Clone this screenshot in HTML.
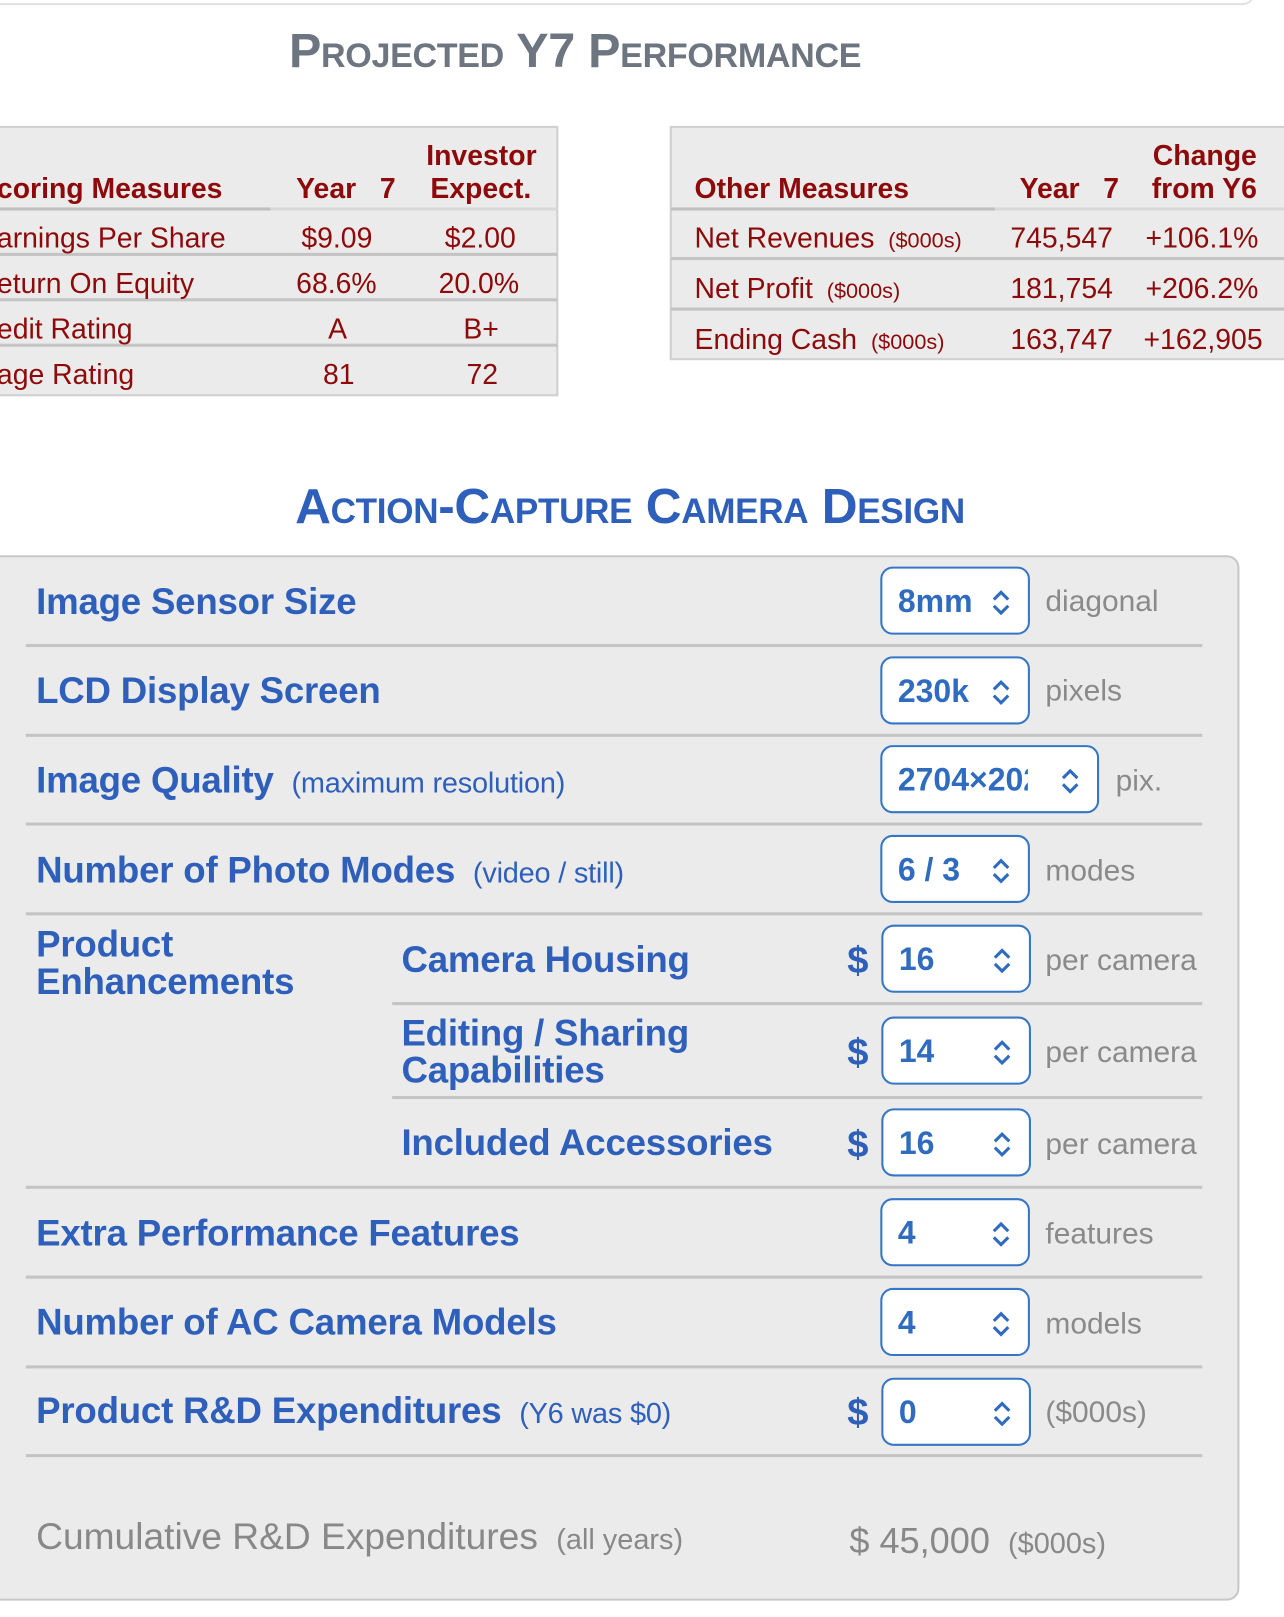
<!DOCTYPE html>
<html style="overflow:hidden;width:1284px;height:1617px"><head><meta charset="utf-8"><style>
*{margin:0;padding:0;box-sizing:border-box}
html,body{overflow:hidden}
body{width:1284px;height:1617px;background:#fff;position:relative;font-family:"Liberation Sans",Arial,sans-serif}
#clip{position:absolute;left:0;top:0;width:1284px;height:1617px;overflow:hidden}
#w{position:absolute;left:0;top:0;width:1244px;height:1567px;transform:scale(1.032);transform-origin:0 0}
.t{position:absolute;white-space:nowrap;line-height:1}
.r{color:#8e0a0a}
.rb{color:#8e0a0a;font-weight:bold}
.b{color:#2e5fbb;font-weight:bold;font-size:35.5px;letter-spacing:-0.2px}
.s{color:#2e5fbb;font-size:28px;font-weight:normal}
.u{color:#8a8a8a;font-size:29px}
.ln{position:absolute;height:3px;background:#c4c4c4}
.in{position:absolute;background:#fff;border:2px solid #3577c6;border-radius:12px;height:66px;width:145px}
.in span{position:absolute;left:15px;top:16px;font-size:31px;font-weight:bold;color:#2f6cc0;line-height:1;white-space:nowrap;overflow:hidden}
.in svg{position:absolute;right:16px;top:20px}
.d{position:absolute;color:#2e5fbb;font-weight:bold;font-size:37px;line-height:1}
.tb{font-size:27.5px}
</style></head><body><div id="clip"><div id="w">
<div style="position:absolute;left:-20px;top:-20px;width:1236px;height:25px;border:2px solid #e0e0e0;border-radius:12px"></div>
<div class="t" style="left:280px;top:25px;font-size:47px;font-weight:bold;color:#6d7680;font-variant:small-caps;letter-spacing:-0.3px">Projected Y7 Performance</div>

<div style="position:absolute;left:-10px;top:122px;width:551px;height:262px;background:#ebebeb;border:2px solid #d0d0d0"></div>
<div class="ln" style="left:0;top:201px;width:262px;background:#c0c0c0"></div>
<div class="ln" style="left:262px;top:201px;width:278px;background:#d8d8d8"></div>
<div class="ln" style="left:0;top:245px;width:540px"></div>
<div class="ln" style="left:0;top:289px;width:540px"></div>
<div class="ln" style="left:0;top:333px;width:540px"></div>
<div class="t rb tb" style="left:-3px;top:169px">coring Measures</div>
<div class="t rb tb" style="left:287px;top:169px">Year&nbsp;&nbsp;&nbsp;7</div>
<div class="t rb tb" style="left:413px;top:137px">Investor</div>
<div class="t rb tb" style="left:417px;top:169px">Expect.</div>
<div class="t r tb" style="left:-3px;top:217px">arnings Per Share</div>
<div class="t r tb" style="left:-3px;top:261px">eturn On Equity</div>
<div class="t r tb" style="left:-3px;top:305px">edit Rating</div>
<div class="t r tb" style="left:-3px;top:349px">age Rating</div>
<div class="t r tb" style="left:292px;top:217px">$9.09</div>
<div class="t r tb" style="left:287px;top:261px">68.6%</div>
<div class="t r tb" style="left:318px;top:305px">A</div>
<div class="t r tb" style="left:313px;top:349px">81</div>
<div class="t r tb" style="left:431px;top:217px">$2.00</div>
<div class="t r tb" style="left:425px;top:261px">20.0%</div>
<div class="t r tb" style="left:449px;top:305px">B+</div>
<div class="t r tb" style="left:452px;top:349px">72</div>

<div style="position:absolute;left:649px;top:122px;width:650px;height:227px;background:#ebebeb;border:2px solid #d0d0d0"></div>
<div class="ln" style="left:650px;top:201px;width:314px;background:#c0c0c0"></div>
<div class="ln" style="left:964px;top:201px;width:320px;background:#d8d8d8"></div>
<div class="ln" style="left:650px;top:249px;width:634px"></div>
<div class="ln" style="left:650px;top:298px;width:634px"></div>
<div class="t rb tb" style="left:673px;top:169px">Other Measures</div>
<div class="t rb tb" style="left:988px;top:169px">Year&nbsp;&nbsp;&nbsp;7</div>
<div class="t rb tb" style="left:1117px;top:137px">Change</div>
<div class="t rb tb" style="left:1116px;top:169px">from Y6</div>
<div class="t r tb" style="left:673px;top:217px">Net Revenues <span style="font-size:21px">&nbsp;($000s)</span></div>
<div class="t r tb" style="left:673px;top:266px">Net Profit <span style="font-size:21px">&nbsp;($000s)</span></div>
<div class="t r tb" style="left:673px;top:315px">Ending Cash <span style="font-size:21px">&nbsp;($000s)</span></div>
<div class="t r tb" style="left:979px;top:217px">745,547</div>
<div class="t r tb" style="left:979px;top:266px">181,754</div>
<div class="t r tb" style="left:979px;top:315px">163,747</div>
<div class="t r tb" style="left:1110px;top:217px">+106.1%</div>
<div class="t r tb" style="left:1110px;top:266px">+206.2%</div>
<div class="t r tb" style="left:1108px;top:315px">+162,905</div>

<div class="t" style="left:286px;top:468px;font-size:48px;font-weight:bold;color:#2e5fbb;font-variant:small-caps;letter-spacing:-0.3px">Action-Capture Camera Design</div>

<div style="position:absolute;left:-20px;top:538px;width:1221px;height:1013px;background:#ebebeb;border:2px solid #c8c8c8;border-radius:12px"></div>
<div class="ln" style="left:25px;top:624px;width:1140px"></div>
<div class="ln" style="left:25px;top:711px;width:1140px"></div>
<div class="ln" style="left:25px;top:797px;width:1140px"></div>
<div class="ln" style="left:25px;top:884px;width:1140px"></div>
<div class="ln" style="left:380px;top:971px;width:785px"></div>
<div class="ln" style="left:380px;top:1062px;width:785px"></div>
<div class="ln" style="left:25px;top:1149px;width:1140px"></div>
<div class="ln" style="left:25px;top:1236px;width:1140px"></div>
<div class="ln" style="left:25px;top:1323px;width:1140px"></div>
<div class="ln" style="left:25px;top:1409px;width:1140px"></div>

<div class="t b" style="left:35px;top:566px">Image Sensor Size</div>
<div class="t b" style="left:35px;top:652px">LCD Display Screen</div>
<div class="t b" style="left:35px;top:739px">Image Quality <span class="s">&nbsp;(maximum resolution)</span></div>
<div class="t b" style="left:35px;top:826px">Number of Photo Modes <span class="s">&nbsp;(video / still)</span></div>
<div class="t b" style="left:35px;top:898px">Product</div>
<div class="t b" style="left:35px;top:934px">Enhancements</div>
<div class="t b" style="left:389px;top:913px">Camera Housing</div>
<div class="t b" style="left:389px;top:984px">Editing / Sharing</div>
<div class="t b" style="left:389px;top:1020px">Capabilities</div>
<div class="t b" style="left:389px;top:1090px">Included Accessories</div>
<div class="t b" style="left:35px;top:1178px">Extra Performance Features</div>
<div class="t b" style="left:35px;top:1264px">Number of AC Camera Models</div>
<div class="t b" style="left:35px;top:1350px">Product R&amp;D Expenditures <span class="s">&nbsp;(Y6 was $0)</span></div>

<div class="in" style="left:853px;top:549px"><span>8mm</span><svg width="20" height="26" viewBox="0 0 20 26"><path d="M3 10 L10 3 L17 10 M3 16 L10 23 L17 16" fill="none" stroke="#2f6cc0" stroke-width="3"/></svg></div>
<div class="in" style="left:853px;top:636px"><span>230k</span><svg width="20" height="26" viewBox="0 0 20 26"><path d="M3 10 L10 3 L17 10 M3 16 L10 23 L17 16" fill="none" stroke="#2f6cc0" stroke-width="3"/></svg></div>
<div class="in" style="left:853px;top:722px;width:212px"><span style="width:126px">2704×2028</span><svg width="20" height="26" viewBox="0 0 20 26"><path d="M3 10 L10 3 L17 10 M3 16 L10 23 L17 16" fill="none" stroke="#2f6cc0" stroke-width="3"/></svg></div>
<div class="in" style="left:853px;top:809px"><span>6 / 3</span><svg width="20" height="26" viewBox="0 0 20 26"><path d="M3 10 L10 3 L17 10 M3 16 L10 23 L17 16" fill="none" stroke="#2f6cc0" stroke-width="3"/></svg></div>
<div class="in" style="left:854px;top:896px"><span>16</span><svg width="20" height="26" viewBox="0 0 20 26"><path d="M3 10 L10 3 L17 10 M3 16 L10 23 L17 16" fill="none" stroke="#2f6cc0" stroke-width="3"/></svg></div>
<div class="in" style="left:854px;top:985px"><span>14</span><svg width="20" height="26" viewBox="0 0 20 26"><path d="M3 10 L10 3 L17 10 M3 16 L10 23 L17 16" fill="none" stroke="#2f6cc0" stroke-width="3"/></svg></div>
<div class="in" style="left:854px;top:1074px"><span>16</span><svg width="20" height="26" viewBox="0 0 20 26"><path d="M3 10 L10 3 L17 10 M3 16 L10 23 L17 16" fill="none" stroke="#2f6cc0" stroke-width="3"/></svg></div>
<div class="in" style="left:853px;top:1161px"><span>4</span><svg width="20" height="26" viewBox="0 0 20 26"><path d="M3 10 L10 3 L17 10 M3 16 L10 23 L17 16" fill="none" stroke="#2f6cc0" stroke-width="3"/></svg></div>
<div class="in" style="left:853px;top:1248px"><span>4</span><svg width="20" height="26" viewBox="0 0 20 26"><path d="M3 10 L10 3 L17 10 M3 16 L10 23 L17 16" fill="none" stroke="#2f6cc0" stroke-width="3"/></svg></div>
<div class="in" style="left:854px;top:1335px"><span>0</span><svg width="20" height="26" viewBox="0 0 20 26"><path d="M3 10 L10 3 L17 10 M3 16 L10 23 L17 16" fill="none" stroke="#2f6cc0" stroke-width="3"/></svg></div>

<div class="d" style="left:821px;top:912px">$</div>
<div class="d" style="left:821px;top:1001px">$</div>
<div class="d" style="left:821px;top:1090px">$</div>
<div class="d" style="left:821px;top:1350px">$</div>

<div class="t u" style="left:1013px;top:569px">diagonal</div>
<div class="t u" style="left:1013px;top:656px">pixels</div>
<div class="t u" style="left:1081px;top:743px">pix.</div>
<div class="t u" style="left:1013px;top:830px">modes</div>
<div class="t u" style="left:1013px;top:917px">per camera</div>
<div class="t u" style="left:1013px;top:1006px">per camera</div>
<div class="t u" style="left:1013px;top:1095px">per camera</div>
<div class="t u" style="left:1013px;top:1182px">features</div>
<div class="t u" style="left:1013px;top:1269px">models</div>
<div class="t u" style="left:1013px;top:1355px">($000s)</div>

<div class="t" style="left:35px;top:1471px;font-size:36px;color:#888">Cumulative R&amp;D Expenditures <span style="font-size:28px">&nbsp;(all years)</span></div>
<div class="t" style="left:823px;top:1476px;font-size:35px;color:#888">$ 45,000 <span style="font-size:28px">&nbsp;($000s)</span></div>
</div></div></body></html>
